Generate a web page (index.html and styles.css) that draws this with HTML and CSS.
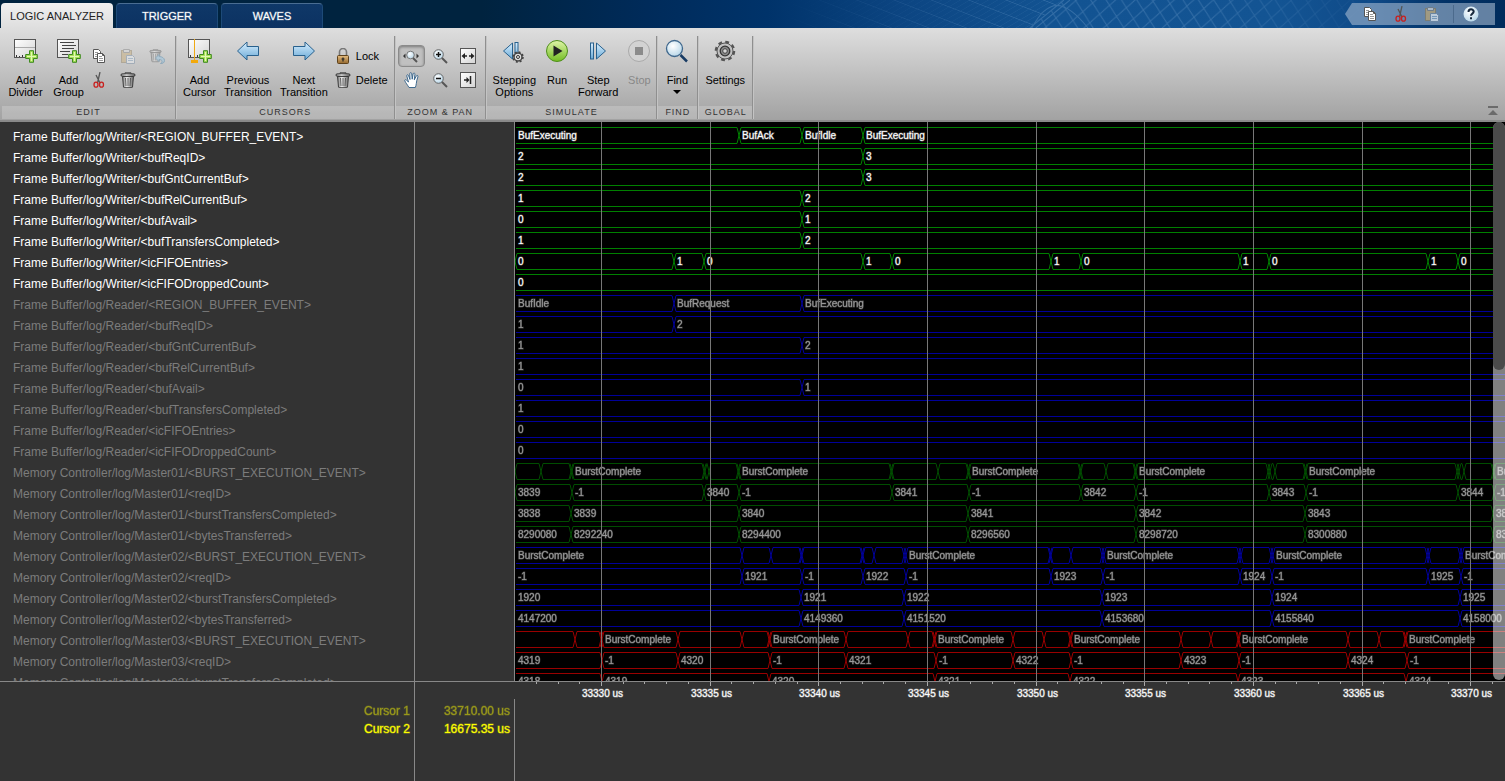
FILE: index.html
```html
<!DOCTYPE html>
<html lang="en">
<head>
    <meta charset="utf-8">
    <title>Logic Analyzer</title>
    <link rel="stylesheet" href="styles.css">
</head>
<body>
    <!-- ICON SHAPES -->
    <svg class="defs" aria-hidden="true">
        <defs>
            <linearGradient id="g-box" x1="0" y1="0" x2="1" y2="1"><stop offset="0" stop-color="#fff"/><stop offset="1" stop-color="#d4d4d4"/></linearGradient>
            <linearGradient id="g-blue" x1="0" y1="0" x2="0" y2="1"><stop offset="0" stop-color="#d9efff"/><stop offset="1" stop-color="#6aaad6"/></linearGradient>
            <linearGradient id="g-gold" x1="0" y1="0" x2="0" y2="1"><stop offset="0" stop-color="#e6bd80"/><stop offset="1" stop-color="#94692f"/></linearGradient>
            <linearGradient id="g-run" x1="0" y1="0" x2="0" y2="1"><stop offset="0" stop-color="#dff5a8"/><stop offset="1" stop-color="#72bc22"/></linearGradient>
            <linearGradient id="g-metal" x1="0" y1="0" x2="1" y2="0"><stop offset="0" stop-color="#777"/><stop offset="0.4" stop-color="#eee"/><stop offset="1" stop-color="#666"/></linearGradient>
            <radialGradient id="g-lens" cx="0.4" cy="0.35" r="0.7"><stop offset="0" stop-color="#fff"/><stop offset="1" stop-color="#b5d5e8"/></radialGradient>
            <linearGradient id="g-fade" x1="0" y1="0" x2="1" y2="0"><stop offset="0" stop-color="#000"/><stop offset="0.45" stop-color="#fff"/><stop offset="0.7" stop-color="#fff"/><stop offset="1" stop-color="#000"/></linearGradient>
            <symbol id="plus" viewBox="0 0 13 13"><path d="M4.5.7h4v3.8h3.8v4H8.5v3.8h-4V8.500H.7v-4h3.800z" fill="#a9e05a" stroke="#3d8a1e"/><path d="M6.500 2v9M2 6.500h9" stroke="#e2f9b4"/></symbol>
            <symbol id="i-divider" viewBox="0 0 26 26">
                <rect x="1.500" y="1.500" width="21" height="18" fill="url(#g-box)" stroke="#555"/><path d="M2 9.500h20" stroke="#aaa"/><path d="M3.500 17v2M6.500 18v1M9.500 17v2M12.500 18v1" stroke="#333"/><use href="#plus" x="12" y="12" width="13" height="13"/>
            </symbol>
            <symbol id="i-group" viewBox="0 0 26 26">
                <rect x="1.500" y="1.500" width="21" height="18" fill="url(#g-box)" stroke="#555"/><path d="M4 4.500h14M6 7.500h14M6 10.500h12M4 13.500h10M6 16.500h6" stroke="#444"/><use href="#plus" x="12" y="12" width="13" height="13"/>
            </symbol>
            <symbol id="i-cursor" viewBox="0 0 26 26">
                <rect x="1.500" y="1.500" width="21" height="18" fill="url(#g-box)" stroke="#555"/><path d="M3.500 17v2M10.500 17v2M13.500 18v1" stroke="#333"/><path d="M7.500 1v22" stroke="#eea915"/><rect x="4" y="22" width="7" height="3" fill="#f2a90c"/><use href="#plus" x="12" y="12" width="13" height="13"/>
            </symbol>
            <symbol id="i-copy" viewBox="0 0 16 16">
                <path d="M2.500 1.500h5l2 2v7h-7z" fill="#fff" stroke="#555"/><path d="M4 4.500h3M4 6.500h3M4 8.500h2" stroke="#999"/><path d="M6.500 5.500h5l2 2v7h-7z" fill="#fff" stroke="#555"/><path d="M11.500 5.500v2h2" fill="none" stroke="#555"/><path d="M8 8.500h3M8 10.500h4M8 12.500h4" stroke="#999"/>
            </symbol>
            <symbol id="i-cut" viewBox="0 0 16 16">
                <path d="M5 3l4 8M9 0L6.500 11" stroke="#555" stroke-width="1.300"/><ellipse cx="5" cy="12.700" rx="2" ry="2.500" fill="none" stroke="#c8201e" stroke-width="1.300"/><ellipse cx="10.500" cy="12.700" rx="2" ry="2.500" fill="none" stroke="#c8201e" stroke-width="1.300"/>
            </symbol>
            <symbol id="i-paste" viewBox="0 0 16 16">
                <rect x="1.500" y="2.500" width="10" height="12" fill="#c9a869" stroke="#8d7951"/><path d="M3.500 4.500v-3h6v3z" fill="#ddd" stroke="#777"/><path d="M6.500 7.500h6l2 2v6h-8z" fill="#f5f8fc" stroke="#6d86a0"/><path d="M8 10.500h5M8 12.500h5" stroke="#7fa3c4"/>
            </symbol>
            <symbol id="i-trash" viewBox="0 0 16 16">
                <path d="M5 2V.8h6V2" fill="none" stroke="#444"/><rect x="1" y="1.800" width="14" height="2.500" rx="1.200" fill="url(#g-metal)" stroke="#333" stroke-width=".9"/><path d="M2.500 4.500h11l-1 10.500a1 1 0 0 1-1 .7h-7a1 1 0 0 1-1-.7z" fill="url(#g-metal)" stroke="#333" stroke-width=".9"/><path d="M5.500 6l.5 8M8 6v8M10.500 6l-.5 8" stroke="#444" stroke-width=".8"/>
            </symbol>
            <symbol id="i-restore" viewBox="0 0 16 16">
                <use href="#i-trash" x="0" y="0" width="13" height="15"/><path d="M6.500 10l3.500-3.500v2c3 0 5.500 1.500 5.500 4s-2 3-4 3c2-1 2.500-4-1.500-4v2z" fill="#8cc5e8" stroke="#3b7ba5"/>
            </symbol>
            <symbol id="i-prev" viewBox="0 0 26 26"><path d="M2.500 13L12 4v4.500h11.500v9H12V22z" fill="url(#g-blue)" stroke="#29618d" stroke-linejoin="round"/></symbol>
            <symbol id="i-next" viewBox="0 0 26 26"><path d="M23.500 13L14 4v4.500H2.500v9H14V22z" fill="url(#g-blue)" stroke="#29618d" stroke-linejoin="round"/></symbol>
            <symbol id="i-lock" viewBox="0 0 16 16">
                <path d="M4.500 8V4a3.500 3.500 0 0 1 7 0v4" fill="none" stroke="#777" stroke-width="1.600"/><rect x="2.500" y="7.500" width="11" height="8" rx="1" fill="url(#g-gold)" stroke="#5e421c"/><path d="M8 9.500v4M6.500 11h3" stroke="#222" stroke-width="1.200"/>
            </symbol>
            <symbol id="i-zoomtime" viewBox="0 0 16 16">
                <path d="M0 8l2.500-2.500v5zM16 8l-2.500-2.500v5z" fill="#333"/><circle cx="7.500" cy="7" r="3.800" fill="url(#g-lens)" stroke="#777"/><path d="M10 10l4 4" stroke="#555" stroke-width="2"/>
            </symbol>
            <symbol id="i-zoomin" viewBox="0 0 16 16">
                <circle cx="6.500" cy="6.500" r="4.800" fill="url(#g-lens)" stroke="#666"/><path d="M4 6.500h5M6.500 4v5" stroke="#111" stroke-width="1.500"/><path d="M10 10l5 5" stroke="#555" stroke-width="2"/>
            </symbol>
            <symbol id="i-zoomout" viewBox="0 0 16 16">
                <circle cx="6.500" cy="6.500" r="4.800" fill="url(#g-lens)" stroke="#666"/><path d="M4 6.500h5" stroke="#111" stroke-width="1.500"/><path d="M10 10l5 5" stroke="#555" stroke-width="2"/>
            </symbol>
            <symbol id="i-fit" viewBox="0 0 16 16">
                <rect x=".5" y=".5" width="15" height="15" fill="url(#g-box)" stroke="#555"/><path d="M1.500 8L5 5v6zM14.500 8L11 5v6z" fill="#222"/><path d="M4 8h3M9 8h3" stroke="#222" stroke-width="1.500"/>
            </symbol>
            <symbol id="i-tocursor" viewBox="0 0 16 16">
                <rect x=".5" y=".5" width="15" height="15" fill="url(#g-box)" stroke="#555"/><path d="M9.500 8L6.500 5v6z" fill="#222"/><path d="M4 8h3M10.500 4v8" stroke="#222" stroke-width="1.500"/>
            </symbol>
            <symbol id="i-hand" viewBox="0 0 16 16">
                <path d="M5 15.500C3.500 13 1.500 10.500.8 8.800c-.3-1 .9-1.500 1.700-.6L4.500 10 2.800 4c-.3-1.300 1.300-1.700 1.700-.5L6 7.500 5.800 1.700c0-1.400 1.800-1.400 1.900 0l.5 5.500.9-5.300c.3-1.300 2-1 1.800.4l-.6 5.500 2-3.800c.6-1.200 2.100-.5 1.600.8-.9 2.500-1.400 4.500-1.600 6.700-.1 1.500-.5 2.500-1 4z" fill="#fff" stroke="#2f5d86" stroke-width=".9"/>
            </symbol>
            <symbol id="i-gear" viewBox="0 0 26 26">
                <circle cx="13" cy="13" r="9" fill="none" stroke="#555" stroke-width="2.500" stroke-dasharray="3.800 3.270"/><circle cx="13" cy="13" r="8" fill="#c2c2c2" stroke="#555"/><circle cx="13" cy="13" r="4.800" fill="#8a8a8a" stroke="#333" stroke-width="1.300"/><circle cx="13" cy="13" r="2.300" fill="#d5d5d5" stroke="#444"/>
            </symbol>
            <symbol id="i-stepping" viewBox="0 0 26 26">
                <path d="M11.500 5v16L2.500 13z" fill="url(#g-blue)" stroke="#29618d"/><rect x="14" y="4.500" width="3" height="16" fill="url(#g-blue)" stroke="#29618d"/>
                <circle cx="17" cy="19" r="4" fill="#ddd" stroke="#444" stroke-width="1.500"/><circle cx="17" cy="19" r="5" fill="none" stroke="#444" stroke-width="1.500" stroke-dasharray="2 1.930"/><circle cx="17" cy="19" r="1.500" fill="#eee" stroke="#333"/>
            </symbol>
            <symbol id="i-run" viewBox="0 0 26 26"><circle cx="13" cy="13" r="10.500" fill="url(#g-run)" stroke="#4f8f1b"/><path d="M9.500 7.500v11l9-5.500z" fill="#222"/></symbol>
            <symbol id="i-step" viewBox="0 0 26 26"><rect x="5.500" y="5" width="3" height="16" fill="url(#g-blue)" stroke="#29618d"/><path d="M11.500 5v16l9-8z" fill="url(#g-blue)" stroke="#29618d"/></symbol>
            <symbol id="i-stop" viewBox="0 0 26 26"><circle cx="13" cy="13" r="10.500" fill="#d2d2d2" stroke="#aaa"/><rect x="9" y="9" width="8" height="8" fill="#8b8b8b"/></symbol>
            <symbol id="i-find" viewBox="0 0 26 26"><path d="M16.500 17l6.500 6.500" stroke="#173a63" stroke-width="2.500"/><circle cx="10.500" cy="10.500" r="8" fill="url(#g-lens)" stroke="#3f678c" stroke-width="1.300"/></symbol>
            <symbol id="i-help" viewBox="0 0 16 16"><circle cx="8" cy="8" r="7.500" fill="url(#g-lens)"/><path d="M5.500 6c0-3.600 5.200-3.300 5.200-.4C10.700 7.700 8 7.500 8 9.800M8 11.300v1.900" fill="none" stroke="#16283c" stroke-width="2"/></symbol>
            <symbol id="i-collapse" viewBox="0 0 12 12"><path d="M1 1h10v2H1zM6 5l5 5H1z" fill="#6b6b6b"/></symbol>
        </defs>
    </svg>

    <header class="banner">
        <svg class="lattice" viewBox="0 0 600 28" preserveAspectRatio="none" aria-hidden="true">
            <defs>
                <pattern id="mesh" width="9" height="9" patternUnits="userSpaceOnUse" patternTransform="skewX(-55) rotate(14)"><path d="M0 0h9M0 0v9" fill="none" stroke="#8fb8e0"/></pattern>
                <pattern id="net" width="17" height="20" patternUnits="userSpaceOnUse" patternTransform="rotate(8)"><path d="M0 0l17 20M17 0L0 20" fill="none" stroke="#9cc0e4"/></pattern>
                <mask id="fade"><rect width="600" height="28" fill="url(#g-fade)"/></mask>
            </defs>
            <g mask="url(#fade)" opacity="0.25"><path d="M0 0h280l-34 28H0z" fill="url(#mesh)"/><path d="M280 0h320v28H246z" fill="url(#net)"/><path d="M280 0l-34 28M286 0l-34 28M248 28c16-30 32-30 56 0" fill="none" stroke="#9cc0e4"/></g>
        </svg>
        <nav class="tabs">
            <button class="tab active">LOGIC ANALYZER</button>
            <button class="tab">TRIGGER</button>
            <button class="tab">WAVES</button>
        </nav>
        <div class="quick">
            <button class="small" aria-label="Copy"><svg><use href="#i-copy"/></svg></button>
            <button class="small" aria-label="Cut"><svg><use href="#i-cut"/></svg></button>
            <button class="small" aria-label="Paste" disabled><svg><use href="#i-paste"/></svg></button>
            <span class="bar"></span>
            <button class="small" aria-label="Help"><svg><use href="#i-help"/></svg></button>
        </div>
    </header>

    <section class="toolstrip">
        <div class="group edit">
            <div class="tools">
                <button class="big"><svg><use href="#i-divider"/></svg><span>Add<br>Divider</span></button>
                <button class="big"><svg><use href="#i-group"/></svg><span>Add<br>Group</span></button>
                <div class="icon-grid">
                    <button class="small" aria-label="Copy"><svg><use href="#i-copy"/></svg></button>
                    <button class="small" aria-label="Paste" disabled><svg><use href="#i-paste"/></svg></button>
                    <button class="small" aria-label="Restore" disabled><svg><use href="#i-restore"/></svg></button>
                    <button class="small" aria-label="Cut"><svg><use href="#i-cut"/></svg></button>
                    <button class="small" aria-label="Delete"><svg><use href="#i-trash"/></svg></button>
                </div>
            </div>
            <h2>EDIT</h2>
        </div>
        <div class="group">
            <div class="tools">
                <button class="big"><svg><use href="#i-cursor"/></svg><span>Add<br>Cursor</span></button>
                <button class="big"><svg><use href="#i-prev"/></svg><span>Previous<br>Transition</span></button>
                <button class="big"><svg><use href="#i-next"/></svg><span>Next<br>Transition</span></button>
                <div class="stack">
                    <button class="line"><svg><use href="#i-lock"/></svg>Lock</button>
                    <button class="line"><svg><use href="#i-trash"/></svg>Delete</button>
                </div>
            </div>
            <h2>CURSORS</h2>
        </div>
        <div class="group zoom">
            <div class="tools">
                <div class="icon-grid">
                    <button class="small pressed" aria-label="Zoom in time"><svg><use href="#i-zoomtime"/></svg></button>
                    <button class="small" aria-label="Zoom in"><svg><use href="#i-zoomin"/></svg></button>
                    <button class="small" aria-label="Fit to view"><svg><use href="#i-fit"/></svg></button>
                    <button class="small" aria-label="Pan"><svg><use href="#i-hand"/></svg></button>
                    <button class="small" aria-label="Zoom out"><svg><use href="#i-zoomout"/></svg></button>
                    <button class="small" aria-label="Go to cursor"><svg><use href="#i-tocursor"/></svg></button>
                </div>
            </div>
            <h2>ZOOM &amp; PAN</h2>
        </div>
        <div class="group simulate">
            <div class="tools">
                <button class="big"><svg><use href="#i-stepping"/></svg><span>Stepping<br>Options</span></button>
                <button class="big"><svg><use href="#i-run"/></svg><span>Run</span></button>
                <button class="big"><svg><use href="#i-step"/></svg><span>Step<br>Forward</span></button>
                <button class="big" disabled><svg><use href="#i-stop"/></svg><span>Stop</span></button>
            </div>
            <h2>SIMULATE</h2>
        </div>
        <div class="group">
            <div class="tools">
                <button class="big"><svg><use href="#i-find"/></svg><span>Find<i class="caret"></i></span></button>
            </div>
            <h2>FIND</h2>
        </div>
        <div class="group">
            <div class="tools">
                <button class="big"><svg><use href="#i-gear"/></svg><span>Settings</span></button>
            </div>
            <h2>GLOBAL</h2>
        </div>
        <button class="collapse" aria-label="Collapse toolstrip"><svg><use href="#i-collapse"/></svg></button>
    </section>

    <main class="viewer">
        <ul class="names" id="names"></ul>
        <div class="values"></div>
        <div class="plot">
            <svg id="plot" role="img" aria-label="Waveforms"></svg>
            <div class="scroll"><div class="thumb"></div></div>
        </div>
    </main>

    <footer class="cursors">
        <div class="cursor-names">
            <p class="dim">Cursor 1</p>
            <p>Cursor 2</p>
        </div>
        <div class="cursor-times">
            <p class="dim">33710.00 us</p>
            <p>16675.35 us</p>
        </div>
        <svg id="axis" role="img" aria-label="Time axis"></svg>
    </footer>

    <script src="waves.js"></script>
</body>
</html>
```
FILE: styles.css
```css
* {
    box-sizing: border-box;
}
body {
    margin: 0;
    height: 100vh;
    display: flex;
    flex-direction: column;
    overflow: hidden;
    background: #333;
    font-family: "Liberation Sans", Arial, sans-serif;
    font-size: 11px;
}
button {
    margin: 0;
    padding: 0;
    border: 0;
    background: none;
    color: #000;
    font: inherit;
}
.defs {
    position: absolute;
    width: 0;
    height: 0;
}

/* top banner */
.banner {
    position: relative;
    flex: none;
    display: flex;
    justify-content: space-between;
    height: 28px;
    padding: 3px 10px 0 1px;
    background: linear-gradient(90deg, #00233f 0%, #00233f 32%, #002b5a 43%, #00336a 51%, #0c4582 60%, #125392 70%, #135493 85%, #0f4a88 91%, #023266 96%, #002c5c 100%);
}
.lattice {
    position: absolute;
    top: 0;
    right: 8%;
    width: 40%;
    height: 100%;
}
.tabs {
    position: relative;
    display: flex;
    gap: 3px;
}
.tab {
    width: 102px;
    border: 1px solid #1d4a78;
    border-top-color: #4a6d92;
    border-bottom: 0;
    border-radius: 4px 4px 0 0;
    background: linear-gradient(#0f3868, #0c3262);
    color: #fff;
    -webkit-text-stroke: 1px rgba(255, 255, 255, 0.3);
}
.tab.active {
    width: 112px;
    border: 0;
    background: linear-gradient(#f0f0f0, #dedede);
    color: #222;
    -webkit-text-stroke: 0;
}
.quick {
    position: relative;
    display: flex;
    align-items: center;
    gap: 15px;
    width: 150px;
    height: 22px;
    padding: 0 15px 0 17px;
    background: rgba(165, 185, 208, 0.6);
    clip-path: polygon(0 50%, 7px 0, 100% 0, 100% 100%, 7px 100%);
}
.quick .bar {
    width: 1px;
    height: 18px;
    margin-right: -6px;
    margin-left: -2px;
    background: #4b6a8c;
}
.quick .small:disabled svg {
    opacity: 0.6;
}

/* toolstrip */
.toolstrip {
    flex: none;
    display: flex;
    height: 94px;
    padding: 8px 0 1px 1px;
    border-bottom: 2px solid #8a8a8a;
    background: linear-gradient(#dedede, #a2a2a2);
}
.group {
    display: flex;
    flex-direction: column;
    border-right: 1px solid #8f8f8f;
    box-shadow: 1px 0 0 #c4c4c4;
}
.tools {
    flex: 1;
    display: flex;
    padding: 0 3px;
}
.group h2 {
    margin: 0 0 0 1px;
    height: 13px;
    background: rgba(255, 255, 255, 0.2);
    color: #333;
    font-size: 9px;
    font-weight: normal;
    letter-spacing: 1px;
    line-height: 13px;
    text-align: center;
}
.big {
    display: flex;
    flex-direction: column;
    align-items: center;
    min-width: 33px;
    padding: 2px 4px 0;
    line-height: 12px;
}
.big svg {
    width: 26px;
    height: 26px;
    margin-bottom: 10px;
}
.big:disabled {
    color: #888;
}
.edit .big {
    min-width: 43px;
}
.simulate .tools {
    padding-right: 0;
}
.caret {
    display: block;
    width: 8px;
    margin: 4px auto 0;
    border: 4px solid transparent;
    border-top-color: #000;
}
.small {
    display: flex;
    align-items: center;
    justify-content: center;
}
.small svg,
.line svg {
    width: 16px;
    height: 16px;
}
.small:disabled svg {
    opacity: 0.4;
}
.icon-grid {
    display: grid;
    grid-template-columns: repeat(3, 28px);
    grid-template-rows: repeat(2, 24px);
    align-content: start;
    padding-top: 8px;
}
.edit .icon-grid {
    grid-template-columns: repeat(3, 29px);
    margin: 0 1px 0 -6px;
}
.pressed {
    margin: 1px 1px 1px 0;
    border: 1px solid #8a8a8a;
    border-radius: 4px;
    background: #c0c0c0;
    box-shadow: inset 0 1px 3px #777;
}
.stack {
    padding: 8px 3px 0 3px;
}
.line {
    display: flex;
    align-items: center;
    gap: 5px;
    height: 24px;
}
.collapse {
    align-self: flex-end;
    margin: 0 6px 2px auto;
}
.collapse svg {
    display: block;
    width: 12px;
    height: 12px;
}

/* signals */
.viewer {
    flex: 1;
    min-height: 0;
    display: grid;
    grid-template-columns: 415px 100px 1fr;
    grid-template-rows: 100%;
}
.names {
    margin: 0;
    padding: 5px 0 0 13px;
    border-right: 1px solid #888;
    overflow: hidden;
    list-style: none;
    color: #fff;
    font-size: 12px;
    line-height: 21px;
    white-space: nowrap;
}
.names .dim {
    color: #7c7c7c;
}
.values {
    border-right: 1px solid #888;
}
.plot {
    position: relative;
    min-width: 0;
    background: #000;
}
.plot svg,
#axis {
    display: block;
    width: 100%;
    height: 100%;
    font-size: 10px;
}
.trace path {
    fill: none;
}
.trace.dim {
    opacity: 0.6;
}
.green path { stroke: #008000; }
.blue path { stroke: #0000ff; }
.red path { stroke: #ff0000; }
text {
    fill: #fff;
    stroke: #fff;
    stroke-opacity: 0.4;
}
.grid {
    stroke: #777;
}
.tick {
    stroke: #aaa;
}
.scroll {
    position: absolute;
    top: 0;
    right: 0;
    bottom: 1px;
    width: 12px;
    border-radius: 6px;
    background: rgba(255, 255, 255, 0.5);
}
.thumb {
    height: 248px;
    border-radius: 6px;
    background: #4a4a4a;
}

/* time axis and cursors */
.cursors {
    flex: none;
    display: grid;
    grid-template-columns: 415px 100px 1fr;
    height: 100px;
    border-top: 1px solid #888;
    color: #ff0;
    font-size: 12px;
    line-height: 18px;
    text-align: right;
}
.cursors p {
    margin: 0;
    -webkit-text-stroke: 1px rgba(255, 255, 0, 0.4);
}
.cursors .dim {
    opacity: 0.5;
}
.cursor-names {
    padding: 20px 4px 0 0;
    border-right: 1px solid #888;
}
.cursor-times {
    margin-top: 17px;
    padding: 3px 4px 0 0;
    border-right: 1px solid #888;
}
```
FILE: waves.js
```javascript
var ROW = 21;
var names = document.getElementById("names");
var plot = document.getElementById("plot");
var axis = document.getElementById("axis");

// edges shared by several signals, measured from the left of the plot
var m1 = [56, 224, 453, 621, 790, 978];
var m2 = [286, 389, 587, 757, 945];
var m3 = [87, 254, 420, 555, 723, 891];
var BC = "BurstComplete";

// name, color, dimmed, first value, then pairs of edge and value
var signals = [
    ["Frame Buffer/log/Writer/<REGION_BUFFER_EVENT>", "green", false, "BufExecuting", [[224, "BufAck"], [287, "BufIdle"], [348, "BufExecuting"]]],
    ["Frame Buffer/log/Writer/<bufReqID>", "green", false, "2", [[348, "3"]]],
    ["Frame Buffer/log/Writer/<bufGntCurrentBuf>", "green", false, "2", [[348, "3"]]],
    ["Frame Buffer/log/Writer/<bufRelCurrentBuf>", "green", false, "1", [[287, "2"]]],
    ["Frame Buffer/log/Writer/<bufAvail>", "green", false, "0", [[287, "1"]]],
    ["Frame Buffer/log/Writer/<bufTransfersCompleted>", "green", false, "1", [[287, "2"]]],
    ["Frame Buffer/log/Writer/<icFIFOEntries>", "green", false, "0", [[0, ""], [159, "1"], [189, "0"], [348, "1"], [377, "0"], [536, "1"], [566, "0"], [725, "1"], [754, "0"], [913, "1"], [943, "0"]]],
    ["Frame Buffer/log/Writer/<icFIFODroppedCount>", "green", false, "0", []],
    ["Frame Buffer/log/Reader/<REGION_BUFFER_EVENT>", "blue", true, "BufIdle", [[159, "BufRequest"], [287, "BufExecuting"]]],
    ["Frame Buffer/log/Reader/<bufReqID>", "blue", true, "1", [[159, "2"]]],
    ["Frame Buffer/log/Reader/<bufGntCurrentBuf>", "blue", true, "1", [[287, "2"]]],
    ["Frame Buffer/log/Reader/<bufRelCurrentBuf>", "blue", true, "1", []],
    ["Frame Buffer/log/Reader/<bufAvail>", "blue", true, "0", [[287, "1"]]],
    ["Frame Buffer/log/Reader/<bufTransfersCompleted>", "blue", true, "1", []],
    ["Frame Buffer/log/Reader/<icFIFOEntries>", "blue", true, "0", []],
    ["Frame Buffer/log/Reader/<icFIFODroppedCount>", "blue", true, "0", []],
    ["Memory Controller/log/Master01/<BURST_EXECUTION_EVENT>", "green", true, "", [[0, ""], [26, ""], [56, ""], [57, BC], [189, ""], [190, ""], [194, ""], [223, ""], [224, BC], [376, ""], [377, ""], [423, ""], [453, ""], [454, BC], [565, ""], [566, ""], [591, ""], [620, ""], [621, BC], [753, ""], [755, ""], [760, ""], [790, ""], [791, BC], [942, ""], [944, ""], [949, ""], [978, ""], [979, BC]]],
    ["Memory Controller/log/Master01/<reqID>", "green", true, "3839", [[0, ""], [57, "-1"], [189, "3840"], [224, "-1"], [377, "3841"], [454, "-1"], [566, "3842"], [621, "-1"], [754, "3843"], [791, "-1"], [943, "3844"], [979, "-1"]]],
    ["Memory Controller/log/Master01/<burstTransfersCompleted>", "green", true, "3838", pair(m1, ["3839", "3840", "3841", "3842", "3843", "3844"])],
    ["Memory Controller/log/Master01/<bytesTransferred>", "green", true, "8290080", pair(m1, ["8292240", "8294400", "8296560", "8298720", "8300880", "8303040"])],
    ["Memory Controller/log/Master02/<BURST_EXECUTION_EVENT>", "blue", true, BC, [[227, ""], [256, ""], [286, ""], [287, ""], [347, ""], [348, ""], [359, ""], [389, ""], [391, BC], [535, ""], [536, ""], [556, ""], [587, ""], [589, BC], [724, ""], [726, ""], [756, ""], [758, BC], [912, ""], [914, ""], [945, ""], [947, BC]]],
    ["Memory Controller/log/Master02/<reqID>", "blue", true, "-1", [[227, "1921"], [287, "-1"], [348, "1922"], [391, "-1"], [536, "1923"], [588, "-1"], [725, "1924"], [757, "-1"], [913, "1925"], [946, "-1"]]],
    ["Memory Controller/log/Master02/<burstTransfersCompleted>", "blue", true, "1920", pair(m2, ["1921", "1922", "1923", "1924", "1925"])],
    ["Memory Controller/log/Master02/<bytesTransferred>", "blue", true, "4147200", pair(m2, ["4149360", "4151520", "4153680", "4155840", "4158000"])],
    ["Memory Controller/log/Master03/<BURST_EXECUTION_EVENT>", "red", true, "", [[60, ""], [86, ""], [87, BC], [163, ""], [227, ""], [254, ""], [255, BC], [331, ""], [393, ""], [419, ""], [420, BC], [498, ""], [529, ""], [555, ""], [556, BC], [666, ""], [696, ""], [723, ""], [724, BC], [833, ""], [864, ""], [890, ""], [891, BC]]],
    ["Memory Controller/log/Master03/<reqID>", "red", true, "4319", [[87, "-1"], [163, "4320"], [255, "-1"], [331, "4321"], [421, "-1"], [498, "4322"], [556, "-1"], [666, "4323"], [724, "-1"], [833, "4324"], [892, "-1"]]],
    ["Memory Controller/log/Master03/<burstTransfersCompleted>", "red", true, "4318", pair(m3, ["4319", "4320", "4321", "4322", "4323", "4324"])]
];

function pair(edges, values) {
    return edges.map(function (edge, i) { return [edge, values[i]]; });
}

function add(parent, tag, attrs, text) {
    var el = document.createElementNS("http://www.w3.org/2000/svg", tag);
    for (var key in attrs) el.setAttribute(key, attrs[key]);
    if (text) el.textContent = text;
    parent.appendChild(el);
    return el;
}

function drawSignal(signal, i) {
    var item = document.createElement("li");
    item.textContent = signal[0];
    if (signal[2]) item.className = "dim";
    names.appendChild(item);

    var top = i * ROW + 5.5;
    var bottom = top + 16;
    var g = add(plot, "g", { "class": "trace " + signal[1] + (signal[2] ? " dim" : "") });
    var d = "";
    var x = 1;
    signal[4].forEach(function (edge) {
        var left = edge[0] - 2;
        var right = edge[0] + 2;
        if (left > x) d += "M" + x + " " + top + "H" + left + "M" + x + " " + bottom + "H" + left;
        d += "M" + left + " " + top + "L" + right + " " + bottom;
        d += "M" + left + " " + bottom + "L" + right + " " + top;
        x = right;
    });
    d += "M" + x + " " + top + "H4000M" + x + " " + bottom + "H4000";
    add(g, "path", { d: d });

    add(g, "text", { x: 3, y: top + 11.5 }, signal[3]);
    signal[4].forEach(function (edge) {
        if (edge[1]) add(g, "text", { x: edge[0] + 3, y: top + 11.5 }, edge[1]);
    });
}

signals.forEach(drawSignal);

// one tick per microsecond, a grid line and a label every five
var perUs = 21.73;
for (var us = 33326; us < 33400; us++) {
    var x = Math.round(86 + (us - 33330) * perUs) + 0.5;
    var major = us % 5 === 0;
    add(axis, "path", { "class": "tick", d: "M" + x + " 0v" + (major ? 4 : 2) });
    if (major) {
        add(plot, "path", { "class": "grid", d: "M" + x + " 0v2000" });
        add(axis, "text", { x: x + 1, y: 15, "text-anchor": "middle" }, us + " us");
    }
}
```
